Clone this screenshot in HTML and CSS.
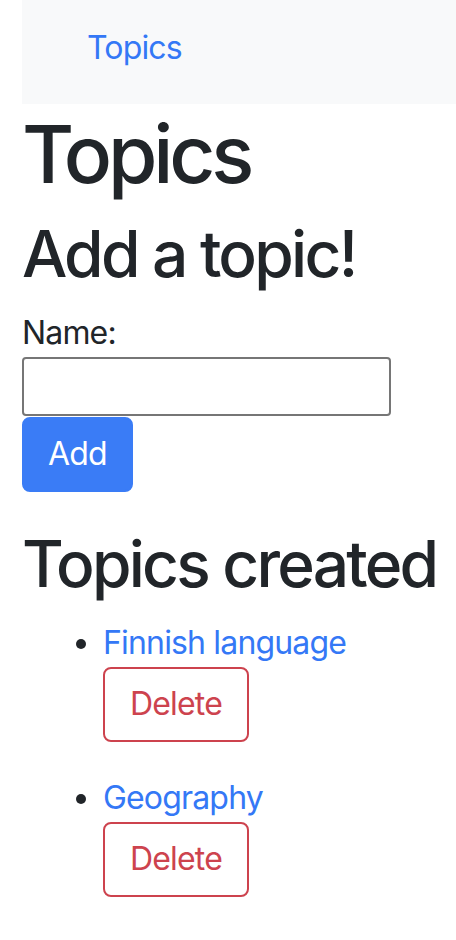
FILE: index.html
```html
<!DOCTYPE html>
<html lang="en">
<head>
<meta charset="utf-8">
<title>Topics</title>
<link rel="stylesheet" href="styles.css">
</head>
<body>
<div class="page">
  <nav class="navbar">
    <a class="nav-link" href="#">Topics</a>
  </nav>
  <h1 class="title">Topics</h1>
  <h2 class="subtitle">Add a topic!</h2>
  <form class="add-form">
    <label class="label" for="name">Name:</label>
    <input class="input" id="name" type="text">
    <button class="btn btn-primary" type="button">Add</button>
  </form>
  <h2 class="subtitle">Topics created</h2>
  <ul class="topic-list">
    <li class="topic">
      <a class="link" href="#">Finnish language</a>
      <div class="topic-actions"><button class="btn btn-outline-danger" type="button">Delete</button></div>
    </li>
    <li class="topic">
      <a class="link" href="#">Geography</a>
      <div class="topic-actions"><button class="btn btn-outline-danger" type="button">Delete</button></div>
    </li>
  </ul>
</div>
</body>
</html>
```

FILE: styles.css
```css
html, body {
  margin: 0;
  padding: 0;
  background: #ffffff;
}
body {
  font-family: Inter, "Noto Sans", sans-serif;
  font-size: 32px;
  line-height: 48px;
  letter-spacing: -0.026em;
  color: #212529;
}
.page {
  padding-left: 22px;
}
.navbar {
  background: #f8f9fa;
  height: 104px;
  box-sizing: border-box;
  padding: 24px 0 0 65px;
}
.nav-link {
  color: #3478f6;
  text-decoration: none;
  display: block;
  line-height: 48px;
}
.title {
  font-size: 80px;
  line-height: 96px;
  font-weight: 540;
  letter-spacing: -0.052em;
  margin: 2px 0 14px 0;
}
.subtitle {
  font-size: 64px;
  line-height: 76.8px;
  font-weight: 540;
  letter-spacing: -0.043em;
  white-space: nowrap;
  margin: 0 0 16px 0;
}
.add-form {
  margin: 0 0 34px 0;
}
.label {
  display: block;
}
.input {
  display: block;
  box-sizing: border-box;
  width: 369px;
  height: 59px;
  border: 2px solid #767676;
  border-radius: 4px;
  margin: 0;
  padding: 0 8px;
  font: inherit;
}
.btn {
  display: inline-block;
  font: inherit;
  letter-spacing: inherit;
  line-height: 48px;
  padding: 11.5px 24px;
  border-radius: 8px;
  margin: 0;
  cursor: pointer;
}
.btn-primary {
  margin-top: 1px;
  background: #3a7cf6;
  border: 2px solid #3a7cf6;
  color: #ffffff;
}
.btn-outline-danger {
  padding: 11.5px 25px;
  background: #ffffff;
  border: 2px solid #cd434e;
  color: #cd434e;
}
.topic-list {
  margin: 0;
  padding-left: 81px;
}
.topic {
  margin-bottom: 32px;
}
.link {
  color: #3478f6;
  text-decoration: none;
}
.topic-actions {
  display: block;
}
```
